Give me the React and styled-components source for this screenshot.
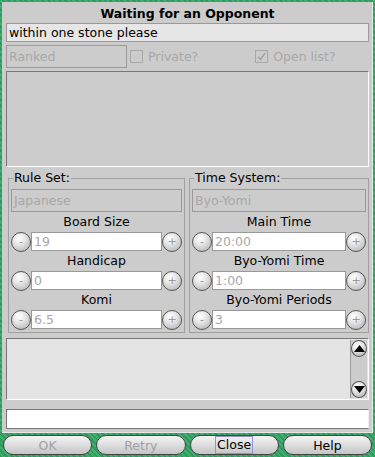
import React from 'react';
import styled, { createGlobalStyle } from 'styled-components';

const Global = createGlobalStyle`
  html, body { margin: 0; padding: 0; }
  body {
    width: 375px;
    height: 457px;
    overflow: hidden;
    font-family: "DejaVu Sans", "Liberation Sans", sans-serif;
    font-size: 12.5px;
    color: #000;
  }
`;

const Frame = styled.div`
  width: 375px;
  height: 457px;
  box-sizing: border-box;
  padding: 2px 2px 0 2px;
  display: flex;
  flex-direction: column;
  background: repeating-linear-gradient(
    45deg,
    #2f9a5c 0px,
    #2f9a5c 2px,
    #3fae6e 2px,
    #3fae6e 4px
  );
`;

const Panel = styled.div`
  height: 431px;
  box-sizing: border-box;
  background: #cccccc;
  border-right: 1px solid #e8e8e8;
  border-bottom: 1px solid #e8e8e8;
  padding: 3px 3px 0 4px;
  display: flex;
  flex-direction: column;
`;

const Title = styled.div`
  text-align: center;
  font-weight: bold;
  font-size: 12.5px;
  height: 18px;
  line-height: 18px;
`;

const Field = styled.div`
  box-sizing: border-box;
  height: ${p => p.$h || 19}px;
  line-height: ${p => (p.$h || 19) - 2}px;
  border: 1px solid #999;
  background: ${p => p.$bg || '#e6e6e6'};
  color: ${p => (p.$dim ? '#a8a8a8' : '#000')};
  padding: 0 2px;
  white-space: nowrap;
  overflow: hidden;
`;

const OptRow = styled.div`
  display: flex;
  align-items: center;
  margin-top: 3px;
  height: 23px;
`;

const Ranked = styled(Field)`
  width: 121px;
  height: 23px;
  line-height: 21px;
  background: #cccccc;
`;

const Check = styled.label`
  display: flex;
  align-items: center;
  gap: 5px;
  color: #a8a8a8;
  margin-left: ${p => p.$ml}px;
`;

const Box = styled.span`
  width: 11px;
  height: 11px;
  border: 1px solid #a8a8a8;
  display: inline-flex;
  align-items: center;
  justify-content: center;
`;

const BigArea = styled.div`
  margin-top: 3px;
  height: 96px;
  box-sizing: border-box;
  border-top: 1px solid #777;
  border-left: 1px solid #777;
  border-right: 1px solid #fff;
  border-bottom: 1px solid #fff;
  background: #cccccc;
`;

const Columns = styled.div`
  display: grid;
  grid-template-columns: 177px 180px;
  gap: 4px;
  margin-top: 4px;
  padding-left: 2px;
`;

const Group = styled.fieldset`
  margin: 0;
  padding: 0 2px 2px 2px;
  border: 1px solid #a0a0a0;
  height: 162px;
  box-sizing: border-box;
  display: flex;
  flex-direction: column;
`;

const Legend = styled.legend`
  padding: 0 1px;
  margin-left: 2px;
  line-height: 14px;
`;

const Select = styled(Field)`
  height: 23px;
  line-height: 21px;
  background: #cccccc;
  margin-top: 4px;
`;

const Label = styled.div`
  text-align: center;
  height: 20px;
  line-height: 20px;
`;

const SpinRow = styled.div`
  display: flex;
  align-items: center;
  height: 19px;
`;

const Round = styled.div`
  width: 20px;
  height: 20px;
  flex: none;
  box-sizing: border-box;
  border-radius: 50%;
  border: 1px solid #555;
  background: radial-gradient(circle at 40% 30%, #ffffff 0%, #e8e8e8 35%, #aaaaaa 100%);
  display: flex;
  align-items: center;
  justify-content: center;
  color: #999;
  font-size: 11px;
  line-height: 1;
`;

const SpinInput = styled(Field)`
  flex: 1;
  background: #fff;
  color: #a8a8a8;
  height: 19px;
`;

const LogArea = styled.div`
  margin-top: 5px;
  height: 62px;
  box-sizing: border-box;
  border: 1px solid #777;
  border-right-color: #fff;
  border-bottom-color: #fff;
  background: #e4e4e4;
  display: flex;
  justify-content: flex-end;
  padding: 1px 1px 1px 0;
`;

const Scroll = styled.div`
  width: 16px;
  border-left: 1px solid #999;
  background: #cccccc;
  display: flex;
  flex-direction: column;
  justify-content: space-between;
  align-items: center;
`;

const ScrollBtn = styled(Round)`
  width: 16px;
  height: 17px;
`;

const ChatInput = styled.div`
  margin-top: 9px;
  height: 20px;
  box-sizing: border-box;
  border-top: 1px solid #777;
  border-left: 1px solid #777;
  border-bottom: 1px solid #777;
  border-right: 1px solid #eee;
  background: #fff;
`;

const Buttons = styled.div`
  display: grid;
  grid-template-columns: repeat(4, 1fr);
  gap: 4px;
  padding: 2px 1px 0 1px;
`;

const Btn = styled.div`
  height: 20px;
  box-sizing: border-box;
  border: 1px solid #444;
  border-radius: 10px;
  background: linear-gradient(#f4f4f4 0%, #e0e0e0 45%, #c4c4c4 100%);
  display: flex;
  align-items: center;
  justify-content: center;
  color: ${p => (p.$dim ? '#a0a0a0' : '#000')};
`;

const Focus = styled.span`
  border: 1px solid #9a90d8;
  padding: 0 1px;
  line-height: 16px;
`;

const Tri = ({ up }) => (
  <svg width="11" height="7" viewBox="0 0 11 7">
    <path d={up ? 'M0 7 L5.5 0 L11 7 Z' : 'M0 0 L11 0 L5.5 7 Z'} fill="#000" />
  </svg>
);

const Spinner = ({ label, value }) => (
  <>
    <Label>{label}</Label>
    <SpinRow>
      <Round>-</Round>
      <SpinInput>{value}</SpinInput>
      <Round>+</Round>
    </SpinRow>
  </>
);

export default function App() {
  return (
    <Frame>
      <Global />
      <Panel>
        <Title>Waiting for an Opponent</Title>
        <Field $h={19}>within one stone please</Field>
        <OptRow>
          <Ranked $dim>Ranked</Ranked>
          <Check $ml={3}><Box />Private?</Check>
          <Check $ml={57}>
            <Box>
              <svg width="9" height="9" viewBox="0 0 9 9">
                <path d="M1 5 L3.5 7.5 L8 1" stroke="#a0a0a0" strokeWidth="1.4" fill="none" />
              </svg>
            </Box>
            Open list?
          </Check>
        </OptRow>
        <BigArea />
        <Columns>
          <Group>
            <Legend>Rule Set:</Legend>
            <Select $dim>Japanese</Select>
            <Spinner label="Board Size" value="19" />
            <Spinner label="Handicap" value="0" />
            <Spinner label="Komi" value="6.5" />
          </Group>
          <Group>
            <Legend>Time System:</Legend>
            <Select $dim>Byo-Yomi</Select>
            <Spinner label="Main Time" value="20:00" />
            <Spinner label="Byo-Yomi Time" value="1:00" />
            <Spinner label="Byo-Yomi Periods" value="3" />
          </Group>
        </Columns>
        <LogArea>
          <Scroll>
            <ScrollBtn><Tri up /></ScrollBtn>
            <ScrollBtn><Tri /></ScrollBtn>
          </Scroll>
        </LogArea>
        <ChatInput />
      </Panel>
      <Buttons>
        <Btn $dim>OK</Btn>
        <Btn $dim>Retry</Btn>
        <Btn><Focus>Close</Focus></Btn>
        <Btn>Help</Btn>
      </Buttons>
    </Frame>
  );
}
